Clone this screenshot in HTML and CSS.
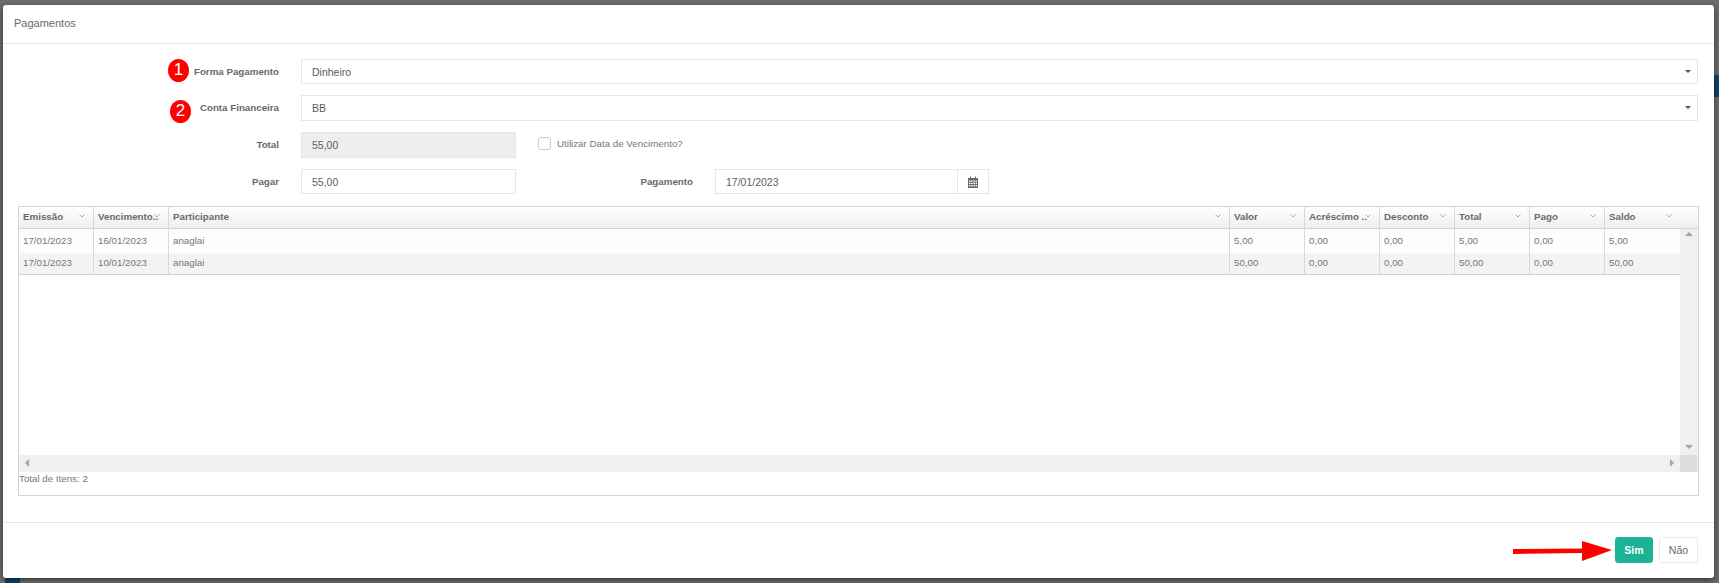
FILE: index.html
```html
<!DOCTYPE html>
<html lang="pt">
<head>
<meta charset="utf-8">
<title>Pagamentos</title>
<link rel="stylesheet" href="styles.css">
</head>
<body>
<div class="backdrop">
  <span class="bg-patch bg-patch-right"></span>
  <span class="bg-patch bg-patch-bottom"></span>
  <div class="modal">
    <header class="modal-head">Pagamentos</header>
    <main class="modal-body">
      <form class="form">
        <label class="lbl">Forma Pagamento</label>
        <div class="field span-all select">Dinheiro<i class="caret"></i></div>
        <label class="lbl">Conta Financeira</label>
        <div class="field span-all select">BB<i class="caret"></i></div>
        <label class="lbl">Total</label>
        <div class="field disabled">55,00</div>
        <div class="check-wrap span-rest"><span class="check"></span><span>Utilizar Data de Vencimento?</span></div>
        <label class="lbl">Pagar</label>
        <div class="field">55,00</div>
        <label class="lbl">Pagamento</label>
        <div class="field date">
          <span class="date-val">17/01/2023</span>
          <span class="addon">
            <svg width="10" height="12" viewBox="0 0 10 12"><path fill="#676a6c" d="M0 2h2V0.5h1V2h4V0.5h1V2h2v10H0z"/><path fill="#fff" d="M1 4.500h1.500v1.300H1zM3.200 4.500h1.500v1.300H3.200zM5.400 4.500h1.500v1.300H5.400zM7.600 4.500h1.400v1.300H7.600zM1 6.700h1.500V8H1zM3.200 6.700h1.500V8H3.200zM5.400 6.700h1.500V8H5.400zM7.600 6.700h1.400V8H7.600zM1 8.900h1.500v1.300H1zM3.200 8.900h1.500v1.300H3.200zM5.400 8.900h1.500v1.300H5.400zM7.600 8.900h1.400v1.300H7.600z"/></svg>
          </span>
        </div>
      </form>

      <section class="grid">
        <div class="g-head">
          <div class="th c-n">Emissão<svg class="chev" viewBox="0 0 6 4"><path d="M.5.500 3 3 5.500.5"/></svg></div>
          <div class="th c-n">Vencimento..<svg class="chev" viewBox="0 0 6 4"><path d="M.5.500 3 3 5.500.5"/></svg></div>
          <div class="th c-w">Participante<svg class="chev" viewBox="0 0 6 4"><path d="M.5.500 3 3 5.500.5"/></svg></div>
          <div class="th c-n">Valor<svg class="chev" viewBox="0 0 6 4"><path d="M.5.500 3 3 5.500.5"/></svg></div>
          <div class="th c-n">Acréscimo ..<svg class="chev" viewBox="0 0 6 4"><path d="M.5.500 3 3 5.500.5"/></svg></div>
          <div class="th c-n">Desconto<svg class="chev" viewBox="0 0 6 4"><path d="M.5.500 3 3 5.500.5"/></svg></div>
          <div class="th c-n">Total<svg class="chev" viewBox="0 0 6 4"><path d="M.5.500 3 3 5.500.5"/></svg></div>
          <div class="th c-n">Pago<svg class="chev" viewBox="0 0 6 4"><path d="M.5.500 3 3 5.500.5"/></svg></div>
          <div class="th c-n th-last">Saldo<svg class="chev" viewBox="0 0 6 4"><path d="M.5.500 3 3 5.500.5"/></svg></div>
          <div class="th-fill"></div>
        </div>
        <div class="g-body">
          <div class="g-rows">
            <div class="tr tr-first">
              <div class="td c-n">17/01/2023</div><div class="td c-n">16/01/2023</div><div class="td c-w">anaglai</div>
              <div class="td c-n">5,00</div><div class="td c-n">0,00</div><div class="td c-n">0,00</div>
              <div class="td c-n">5,00</div><div class="td c-n">0,00</div><div class="td c-n td-last">5,00</div>
            </div>
            <div class="tr tr-alt">
              <div class="td c-n">17/01/2023</div><div class="td c-n">10/01/2023</div><div class="td c-w">anaglai</div>
              <div class="td c-n">50,00</div><div class="td c-n">0,00</div><div class="td c-n">0,00</div>
              <div class="td c-n">50,00</div><div class="td c-n">0,00</div><div class="td c-n td-last">50,00</div>
            </div>
          </div>
          <div class="vscroll"><i class="arr arr-up"></i><i class="arr arr-down"></i></div>
        </div>
        <div class="hscroll">
          <i class="arr arr-left"></i>
          <i class="arr arr-right"></i>
          <span class="corner"></span>
        </div>
        <div class="g-total">Total de Itens: 2</div>
      </section>
    </main>
    <footer class="modal-foot">
      <button class="btn btn-yes" type="button">Sim</button>
      <button class="btn btn-no" type="button">Não</button>
    </footer>

    <span class="badge badge-one">1</span>
    <span class="badge badge-two">2</span>
    <svg class="pointer" width="102" height="24" viewBox="0 0 102 24"><polygon fill="#f00" points="0,9 69,8.500 69,1 99,10 69,21 69,13 0,14"/></svg>
  </div>
</div>
</body>
</html>
```
FILE: styles.css
```css
* { box-sizing: border-box; }
html, body { margin: 0; height: 583px; overflow: hidden; }
body { font-family: "Liberation Sans", Arial, sans-serif; color: #676a6c; }

.backdrop {
  position: relative;
  height: 583px;
  padding: 5px 5px 5px 3px;
  background: #6d6d6d;
}
.bg-patch { position: absolute; background: #0d4668; }
.bg-patch-right { right: 0; top: 75px; width: 5px; height: 22px; }
.bg-patch-bottom { left: 5px; bottom: 0; width: 15px; height: 5px; }

.modal {
  position: relative;
  display: flex;
  flex-direction: column;
  height: 573px;
  background: #fff;
  border-radius: 3px;
  box-shadow: 0 2px 6px rgba(0, 0, 0, .55);
}
.modal-head {
  height: 39px;
  padding: 12px 11px 0;
  font-size: 11px;
  line-height: 13px;
  border-bottom: 1px solid #e5e5e5;
}
.modal-body { flex: 1; padding: 15px 15px 0; }

.form {
  display: grid;
  grid-template-columns: 261px 215px 155px 274px 1fr;
  grid-template-rows: 25px 26px 26px 25px;
  column-gap: 22px;
  row-gap: 11px;
  padding-right: 1px;
}
.lbl {
  display: flex;
  align-items: center;
  justify-content: flex-end;
  font-size: 9.75px;
  font-weight: 700;
  padding-bottom: 1px;
}
.field {
  display: flex;
  align-items: center;
  position: relative;
  padding-left: 10px;
  font-size: 10.500px;
  color: #5c5f61;
  background: #fff;
  border: 1px solid #e5e6e7;
}
.span-all { grid-column: 2 / -1; }
.span-rest { grid-column: 3 / -1; }
.select { color: #555a60; }
.caret {
  position: absolute;
  right: 6px;
  top: 10px;
  border-left: 3px solid transparent;
  border-right: 3px solid transparent;
  border-top: 3px solid #555;
}
.disabled { background: #eee; }
.date { padding-right: 0; }
.date-val { flex: 1; }
.addon {
  display: flex;
  align-items: center;
  justify-content: center;
  width: 31px;
  height: 100%;
  border-left: 1px solid #e5e6e7;
}
.check-wrap {
  display: flex;
  align-items: center;
  gap: 6px;
  font-size: 9.75px;
  color: #777;
  padding-bottom: 3px;
}
.check {
  width: 13px;
  height: 13px;
  border: 1px solid #ccc;
  border-radius: 3px;
  background: #fff;
}

.grid {
  height: 290px;
  margin-top: 12px;
  border: 1px solid #d4d4d4;
  font-size: 9.75px;
}
.g-head {
  display: flex;
  height: 22px;
  border-bottom: 1px solid #d4d4d4;
  background: linear-gradient(#fff, #eee);
}
.c-n { width: 75px; flex: none; }
.c-w { width: 1061px; flex: none; }
.th {
  position: relative;
  padding: 0 4px;
  font-weight: 700;
  line-height: 20px;
  white-space: nowrap;
  overflow: hidden;
  border-right: 1px solid #d9d9d9;
}
.th-last { border-right: 0; }
.th-fill { flex: 1; }
.chev {
  position: absolute;
  right: 8px;
  top: 7px;
  width: 6px;
  height: 4px;
  fill: none;
  stroke: #8a8a8a;
  stroke-width: .7;
}
.g-body { display: flex; height: 226px; }
.g-rows { flex: 1; }
.tr { display: flex; color: #777; }
.tr-first { height: 24px; line-height: 23px; background: #fdfdfd; }
.tr-alt { height: 22px; line-height: 19px; background: #f3f3f3; border-bottom: 1px solid #d4d4d4; }
.td { padding: 0 4px; border-right: 1px solid #d9d9d9; }
.td-last { border-right: 0; }
.vscroll { position: relative; width: 18px; background: #f0f0f0; }
.hscroll { position: relative; height: 17px; background: #f0f0f0; }
.corner { position: absolute; right: 1px; top: 0; width: 17px; height: 17px; background: #dcdcdc; }
.arr { position: absolute; width: 0; height: 0; border: 4px solid transparent; }
.arr-up { left: 5px; top: 3px; border-bottom: 4px solid #a3a3a3; border-top: 0; }
.arr-down { left: 5px; bottom: 6px; border-top: 4px solid #a3a3a3; border-bottom: 0; }
.arr-left { left: 6px; top: 4px; border-right: 4px solid #a3a3a3; border-left: 0; }
.arr-right { right: 24px; top: 4px; border-left: 4px solid #a3a3a3; border-right: 0; }
.g-total { line-height: 13px; color: #777; }

.modal-foot {
  display: flex;
  justify-content: flex-end;
  gap: 6px;
  height: 56px;
  padding: 14px 16px 0 0;
  border-top: 1px solid #e5e5e5;
}
.btn {
  height: 26px;
  font-family: inherit;
  font-size: 10.500px;
  border-radius: 3px;
  padding: 0;
}
.btn-yes { width: 38px; color: #fff; font-weight: 700; background: #1ab394; border: 1px solid #1ab394; }
.btn-no { width: 39px; color: #676a6c; background: #fff; border: 1px solid #e7eaec; }

.badge {
  position: absolute;
  width: 21px;
  height: 23px;
  border-radius: 50%;
  background: #f00;
  color: #fff;
  font-size: 17px;
  line-height: 22px;
  text-align: center;
}
.badge-one { left: 165px; top: 54px; }
.badge-two { left: 167px; top: 95px; }
.pointer { position: absolute; left: 1510px; top: 535px; }
```
